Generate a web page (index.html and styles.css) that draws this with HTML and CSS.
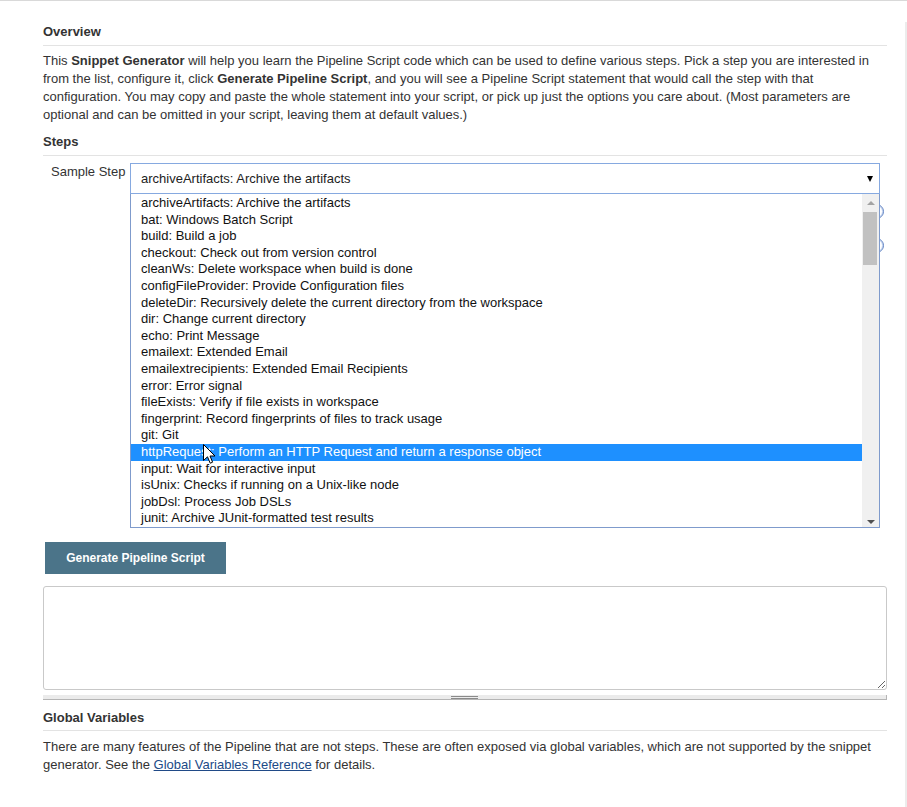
FILE: index.html
```html
<!DOCTYPE html>
<html lang="en">
<head>
<meta charset="utf-8">
<title>Snippet Generator</title>
<link rel="stylesheet" href="styles.css">
</head>
<body>
<div class="page">
  <div class="content">
    <h2 class="section-title first">Overview</h2>
    <p class="desc">This <b>Snippet Generator</b> will help you learn the Pipeline Script code which can be used to define various steps. Pick a step you are interested in from the list, configure it, click <b>Generate Pipeline Script</b>, and you will see a Pipeline Script statement that would call the step with that configuration. You may copy and paste the whole statement into your script, or pick up just the options you care about. (Most parameters are optional and can be omitted in your script, leaving them at default values.)</p>

    <h2 class="section-title">Steps</h2>
    <div class="step-row">
      <label class="step-label">Sample Step</label>
      <div class="select-wrap">
        <div class="select-box">
          <span>archiveArtifacts: Archive the artifacts</span>
          <span class="caret"></span>
        </div>
        <div class="dropdown">
          <ul class="options">
            <li>archiveArtifacts: Archive the artifacts</li>
            <li>bat: Windows Batch Script</li>
            <li>build: Build a job</li>
            <li>checkout: Check out from version control</li>
            <li>cleanWs: Delete workspace when build is done</li>
            <li>configFileProvider: Provide Configuration files</li>
            <li>deleteDir: Recursively delete the current directory from the workspace</li>
            <li>dir: Change current directory</li>
            <li>echo: Print Message</li>
            <li>emailext: Extended Email</li>
            <li>emailextrecipients: Extended Email Recipients</li>
            <li>error: Error signal</li>
            <li>fileExists: Verify if file exists in workspace</li>
            <li>fingerprint: Record fingerprints of files to track usage</li>
            <li>git: Git</li>
            <li class="selected">httpRequest: Perform an HTTP Request and return a response object</li>
            <li>input: Wait for interactive input</li>
            <li>isUnix: Checks if running on a Unix-like node</li>
            <li>jobDsl: Process Job DSLs</li>
            <li>junit: Archive JUnit-formatted test results</li>
          </ul>
          <div class="scrollbar">
            <div class="sb-btn"><span class="sb-up"></span></div>
            <div class="sb-track"><div class="sb-thumb"></div></div>
            <div class="sb-btn sb-btn-down"><span class="sb-down"></span></div>
          </div>
        </div>
        <span class="help-peek peek-1"></span>
        <span class="help-peek peek-2"></span>
        <svg class="cursor" width="13" height="21" viewBox="0 0 13 21" aria-hidden="true">
          <path d="M0.5 0.5 L0.5 16.5 L4.5 12.8 L7.2 19.2 L9.6 18.2 L7 12 L12 12 Z" fill="#fff" stroke="#000" stroke-width="1" stroke-linejoin="miter"/>
        </svg>
      </div>
    </div>

    <div class="actions">
      <button class="generate-btn" type="button">Generate Pipeline Script</button>
    </div>

    <textarea class="snippet"></textarea>
    <div class="resize-bar"><span class="grip"></span></div>

    <h2 class="section-title globals">Global Variables</h2>
    <p class="desc">There are many features of the Pipeline that are not steps. These are often exposed via global variables, which are not supported by the snippet generator. See the <a href="#" class="ref-link">Global Variables Reference</a> for details.</p>
  </div>
</div>
</body>
</html>
```

FILE: styles.css
```css
html, body {
  margin: 0;
  padding: 0;
  background: #fff;
}

body {
  font-family: "Liberation Sans", Arial, sans-serif;
  font-size: 13px;
  color: #333;
}

.page {
  box-sizing: border-box;
  width: 907px;
  min-height: 807px;
  border-top: 1px solid #d9d9d9;
  padding-left: 43px;
}

.content {
  width: 844px;
  min-height: 806px;
  position: relative;
}

.content::after {
  content: "";
  position: absolute;
  top: -1px;
  bottom: 0;
  left: 862px;
  width: 2px;
  background: #ececec;
}

.section-title {
  margin: 9px 0 0;
  font-size: 13px;
  font-weight: bold;
  line-height: 18px;
  padding-bottom: 4px;
  border-bottom: 1px solid #e3e3e3;
  color: #333;
}

.section-title.first {
  margin-top: 22px;
}

.section-title.globals {
  margin-top: 9px;
  padding-bottom: 3px;
}

.desc {
  margin: 6px 0 0;
  line-height: 18px;
}

.section-title.globals + .desc {
  margin-top: 7px;
}

.desc b {
  font-weight: bold;
}

.ref-link {
  color: #204a87;
  text-decoration: underline;
}

.step-row {
  display: flex;
  margin-top: 7px;
}

.step-label {
  width: 79px;
  padding-left: 8px;
  line-height: 18px;
  color: #333;
}

.select-wrap {
  position: relative;
  width: 750px;
}

.select-box {
  box-sizing: border-box;
  height: 31px;
  border: 1px solid #86a9e0;
  display: flex;
  align-items: center;
  justify-content: space-between;
  padding: 0 6px 0 10px;
  background: #fff;
  color: #222;
  position: relative;
  z-index: 2;
}

.caret {
  width: 0;
  height: 0;
  border-left: 3.5px solid transparent;
  border-right: 3.5px solid transparent;
  border-top: 6px solid #000;
  margin-top: 1px;
}

.dropdown {
  position: relative;
  z-index: 2;
  box-sizing: border-box;
  height: 334px;
  border: 1px solid #7f9bcc;
  border-top: none;
  background: #fff;
  display: flex;
}

.options {
  list-style: none;
  margin: 0;
  padding: 1px 0 0;
  flex: 1;
  overflow: hidden;
  color: #111;
}

.options li {
  height: 16.6px;
  line-height: 16.6px;
  padding-left: 10px;
  white-space: nowrap;
}

.options li.selected {
  background: #1e90ff;
  color: #fff;
}

.scrollbar {
  width: 17px;
  background: #f0f0f0;
  display: flex;
  flex-direction: column;
}

.sb-btn {
  height: 17px;
  display: flex;
  align-items: center;
  justify-content: center;
}

.sb-up {
  width: 0;
  height: 0;
  border-left: 4px solid transparent;
  border-right: 4px solid transparent;
  border-bottom: 4px solid #a3a3a3;
  margin-top: 1px;
}

.sb-down {
  width: 0;
  height: 0;
  border-left: 4px solid transparent;
  border-right: 4px solid transparent;
  border-top: 4px solid #505050;
  margin-top: 6px;
}

.sb-track {
  flex: 1;
}

.sb-thumb {
  margin: 1px 2px 0 1px;
  height: 53px;
  background: #c1c1c1;
}

.help-peek {
  position: absolute;
  z-index: 1;
  left: 739px;
  width: 13px;
  height: 13px;
  border: 1.5px solid #5b7fc2;
  border-radius: 50%;
  background: #fff;
  box-shadow: inset 0 0 0 1px #c5d5f0;
}

.peek-1 {
  top: 41px;
}

.peek-2 {
  top: 75px;
}

.cursor {
  position: absolute;
  z-index: 3;
  left: 73px;
  top: 281px;
}

.actions {
  margin-top: 14px;
  padding-left: 2px;
}

.generate-btn {
  width: 181px;
  height: 32px;
  background: #4b7489;
  border: none;
  color: #fff;
  font-family: "Liberation Sans", Arial, sans-serif;
  font-size: 12px;
  font-weight: bold;
  padding: 0;
  cursor: pointer;
}

.snippet {
  display: block;
  box-sizing: border-box;
  width: 844px;
  height: 104px;
  margin: 12px 0 0;
  border: 1px solid #c9c9c9;
  border-radius: 3px;
  font-family: "Liberation Mono", monospace;
  font-size: 13px;
  background: #fff;
}

.resize-bar {
  box-sizing: border-box;
  margin-top: 5px;
  height: 5px;
  background: #ebebeb;
  border-bottom: 1px solid #b5b5b5;
  border-right: 1px solid #b5b5b5;
  display: flex;
  justify-content: center;
}

.grip {
  display: block;
  width: 27px;
  height: 1px;
  margin-top: 1px;
  border-top: 1px solid #8a8a8a;
  border-bottom: 1px solid #8a8a8a;
}
```
